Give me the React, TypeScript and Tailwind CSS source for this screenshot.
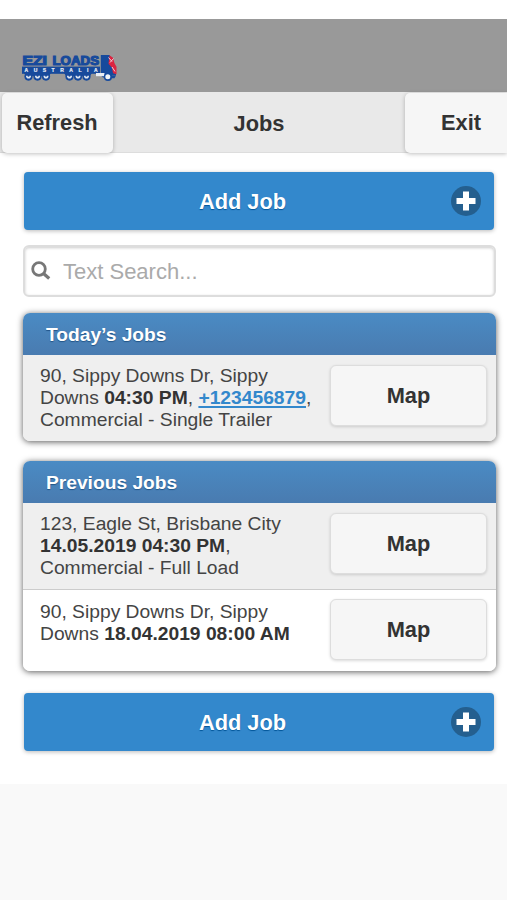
import React from "react";

interface Job {
  id: number;
  details: React.ReactNode;
}

const todaysJobs: Job[] = [
  {
    id: 1,
    details: (
      <>
        90, Sippy Downs Dr, Sippy
        <br />
        Downs <b>04:30 PM</b>,{" "}
        <a href="tel:+123456879" className="font-bold text-[#3388cc] underline decoration-[#3388cc] decoration-[1.5px] underline-offset-[2px]">
          +123456879
        </a>
        ,<br />
        Commercial - Single Trailer
      </>
    ),
  },
];

const previousJobs: Job[] = [
  {
    id: 2,
    details: (
      <>
        123, Eagle St, Brisbane City
        <br />
        <b>14.05.2019 04:30 PM</b>,<br />
        Commercial - Full Load
      </>
    ),
  },
  {
    id: 3,
    details: (
      <>
        90, Sippy Downs Dr, Sippy
        <br />
        Downs <b>18.04.2019 08:00 AM</b>
      </>
    ),
  },
];

// Truck logo, the trailer carries the company name
const Logo: React.FC = () => (
  <svg width="97" height="30" viewBox="0 0 97 30" className="block">
    <rect x="1" y="13.6" width="78" height="7.2" fill="#174a9c" />
    <g
      fontFamily="Liberation Sans, sans-serif"
      fontWeight="700"
      fontSize="12"
      fill="#174a9c"
      stroke="#174a9c"
      strokeWidth="1.1"
    >
      <text x="1.5" y="11.5" textLength="24.5" lengthAdjust="spacingAndGlyphs">
        EZI
      </text>
      <text x="31.5" y="11.5" textLength="46.5" lengthAdjust="spacingAndGlyphs">
        LOADS
      </text>
    </g>
    <text
      x="3.5"
      y="19.1"
      textLength="73"
      fontFamily="Liberation Sans, sans-serif"
      fontWeight="700"
      fontSize="5"
      fill="#e8edf5"
      stroke="#e8edf5"
      strokeWidth="0.2"
    >
      AUSTRALIA
    </text>
    <path d="M3 20h27l-2 3H5zM43 20h28l-2 3H45z" fill="#174a9c" />
    {[7.5, 16.5, 25, 48.5, 57, 65.5].map((cx) => (
      <g key={cx}>
        <circle cx={cx} cy="23.6" r="4.1" fill="#174a9c" />
        <path d={`M${cx - 2.5} 22.8a2.5 2.8 0 0 0 5 0z`} fill="#dfe7f2" />
        <circle cx={cx} cy="22.8" r="1" fill="#174a9c" />
      </g>
    ))}
    <path d="M79.8 2h8.7l4.5 8 2 10v2.5h-4l-2 2h-7l-2.2-2z" fill="#174a9c" />
    <path d="M75 20h8.5v3.2H75z" fill="#e8edf5" />
    <path d="M88.5 2.3l3.5 2.5 1.5 5.5 2 3.5v7.5l-3.5-1-1-5.5-3.5-4z" fill="#dc2440" />
    <path d="M87.5 4.5l3.5 4M92.5 5.5l-3.5 4M91 14l3 4.5" stroke="#f0cdd8" strokeWidth="1" />
    <circle cx="87" cy="23.9" r="4.1" fill="#174a9c" />
    <circle cx="86.8" cy="23.8" r="2.5" fill="#f1f4f8" />
    <path d="M91 22.6h4l-1.5 2.6H91z" fill="#174a9c" />
  </svg>
);

const AddJobButton: React.FC = () => (
  <button className="flex h-[58px] w-[470px] items-center rounded-[4px] bg-[#3388cc] pr-[13px] pl-[11px] text-[21.8px] font-bold text-white shadow-[0_1px_4px_rgba(0,0,0,0.28)]">
    <span className="flex-1 pt-[2px] pr-px text-center [text-shadow:0_1px_1px_#005599]">Add Job</span>
    <svg width="30" height="30" viewBox="0 0 30 30">
      <circle cx="15" cy="15" r="15" fill="#245f8f" />
      <path d="M12 5.5h6V12h6.5v6H18v6.5h-6V18H5.5v-6H12z" fill="#fff" />
    </svg>
  </button>
);

interface JobListProps {
  title: string;
  jobs: Job[];
}

const JobList: React.FC<JobListProps> = ({ title, jobs }) => (
  <section className="w-[473px] overflow-hidden rounded-[7px] shadow-[0_1px_6px_rgba(0,0,0,0.65)]">
    <h2 className="flex h-[42px] items-center bg-linear-to-b from-[#4a8bc4] to-[#497bb0] pt-[2px] pl-[23px] text-[19.2px] font-bold text-white [text-shadow:0_1px_1px_#225588]">
      {title}
    </h2>
    <ul>
      {jobs.map((job, index) => (
        <li
          key={job.id}
          className={`flex justify-between pl-[17px] pr-[9px] ${
            index % 2 === 0 ? "h-[86px] bg-[#efefef] pt-[10px]" : "h-[82px] border-t border-[#cccccc] bg-white pt-[9px]"
          }`}
        >
          <p
            className={`text-[19.25px] leading-[22px] whitespace-nowrap text-[#444444] [&_b]:text-[#333333] ${
              index % 2 === 0 ? "" : "pt-[2px]"
            }`}
          >
            {job.details}
          </p>
          <button className="h-[61px] w-[157px] shrink-0 rounded-[6px] border border-[#dddddd] bg-[#f6f6f6] pt-px text-[21.8px] font-bold text-[#333333] shadow-[0_1px_3px_rgba(0,0,0,0.15)]">
            Map
          </button>
        </li>
      ))}
    </ul>
  </section>
);

const App: React.FC = () => {
  return (
    <div className="h-[900px] w-[507px] overflow-hidden bg-[#f9f9f9] font-['Liberation_Sans',Arial,sans-serif] text-[#333333]">
      <div className="h-[784px] bg-white pt-[19px]">
        {/* Brand bar */}
        <div className="h-[73px] bg-[#999999] pt-[34px] pl-[21px]">
          <Logo />
        </div>

        {/* Toolbar */}
        <header className="flex h-[61px] items-start justify-between overflow-x-clip border-b border-[#dddddd] bg-[#e9e9e9] text-[21.8px] font-bold">
          <button className="mt-px ml-[2px] h-[60px] w-[111px] rounded-[5px] bg-[#f6f6f6] pt-px pr-px shadow-[0_1px_4px_rgba(0,0,0,0.25)]">
            Refresh
          </button>
          <h1 className="leading-[63px]">Jobs</h1>
          <button className="mt-px h-[60px] w-[102px] rounded-l-[5px] bg-[#f6f6f6] pt-px pl-[10px] shadow-[0_1px_4px_rgba(0,0,0,0.25)]">
            Exit
          </button>
        </header>

        <main className="flex flex-col pt-[19px] pl-[23px]">
          <div className="pl-px">
            <AddJobButton />
          </div>

          {/* Search */}
          <label className="mt-[15px] flex h-[52px] w-[473px] items-center rounded-[6px] border-2 border-[#dddddd] bg-white pl-[6px] shadow-[inset_0_1px_3px_rgba(0,0,0,0.2)]">
            <svg width="20" height="20" viewBox="0 0 20 20" fill="none" stroke="#777777">
              <circle cx="8" cy="8" r="6.3" strokeWidth="2.8" />
              <path d="M12.2 12.2l6 5.3" strokeWidth="3.2" />
            </svg>
            <input
              type="text"
              placeholder="Text Search..."
              className="ml-[12px] h-full flex-1 bg-transparent pt-[2px] text-[22px] outline-none placeholder:text-[#aaaaaa]"
            />
          </label>

          <div className="mt-[16px] flex flex-col gap-[20px]">
            <JobList title="Today’s Jobs" jobs={todaysJobs} />
            <JobList title="Previous Jobs" jobs={previousJobs} />
          </div>

          <div className="mt-[22px] pl-px">
            <AddJobButton />
          </div>
        </main>
      </div>
    </div>
  );
};

export default App;
